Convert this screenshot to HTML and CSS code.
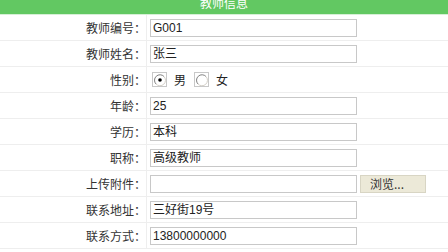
FILE: index.html
```html
<!DOCTYPE html>
<html lang="zh-CN">
<head>
    <meta charset="UTF-8">
    <title>教师信息</title>
    <link rel="stylesheet" href="styles.css">
</head>
<body>
    <div class="panel">
        <div class="panel-title">教师信息</div>
        <div class="form">
            <div class="row">
                <div class="label">教师编号：</div>
                <div class="field"><span class="text-box">G001</span></div>
            </div>
            <div class="row">
                <div class="label">教师姓名：</div>
                <div class="field"><span class="text-box">张三</span></div>
            </div>
            <div class="row">
                <div class="label">性别：</div>
                <div class="field">
                    <span class="radio-box">
                        <svg width="12" height="12" viewBox="0 0 12 12">
                            <path d="M10 2.5 A5 5 0 0 0 2 10" fill="none" stroke="#808080" stroke-width="1"/>
                            <path d="M2 10 A5 5 0 0 0 10 2.5" fill="none" stroke="#d4d0c8" stroke-width="1"/>
                            <circle cx="6" cy="6" r="4" fill="#fff"/>
                            <circle cx="6" cy="6" r="1.8" fill="#000"/>
                        </svg>
                    </span>
                    <span class="radio-text">男</span>
                    <span class="radio-box">
                        <svg width="12" height="12" viewBox="0 0 12 12">
                            <path d="M10 2.5 A5 5 0 0 0 2 10" fill="none" stroke="#808080" stroke-width="1"/>
                            <path d="M2 10 A5 5 0 0 0 10 2.5" fill="none" stroke="#d4d0c8" stroke-width="1"/>
                            <circle cx="6" cy="6" r="4" fill="#fff"/>
                        </svg>
                    </span>
                    <span class="radio-text">女</span>
                </div>
            </div>
            <div class="row">
                <div class="label">年龄：</div>
                <div class="field"><span class="text-box">25</span></div>
            </div>
            <div class="row">
                <div class="label">学历：</div>
                <div class="field"><span class="text-box">本科</span></div>
            </div>
            <div class="row">
                <div class="label">职称：</div>
                <div class="field"><span class="text-box">高级教师</span></div>
            </div>
            <div class="row">
                <div class="label">上传附件：</div>
                <div class="field">
                    <span class="text-box"></span>
                    <span class="browse-btn">浏览...</span>
                </div>
            </div>
            <div class="row">
                <div class="label">联系地址：</div>
                <div class="field"><span class="text-box">三好街19号</span></div>
            </div>
            <div class="row">
                <div class="label">联系方式：</div>
                <div class="field"><span class="text-box">13800000000</span></div>
            </div>
        </div>
    </div>
</body>
</html>
```

FILE: styles.css
```css
* {
    margin: 0;
    padding: 0;
    box-sizing: border-box;
}

body {
    background: #fff;
    color: #333;
    font-family: "Liberation Sans", "Noto Sans CJK SC", sans-serif;
    font-size: 12px;
    overflow: hidden;
}

.panel {
    width: 448px;
}

.panel-title {
    height: 15px;
    line-height: 6px;
    background: #62c862;
    border-bottom: 1px solid #d6f0d6;
    color: #fff;
    text-align: center;
    font-family: "Noto Sans CJK SC", sans-serif;
    font-size: 12px;
    overflow: hidden;
}

.row {
    display: grid;
    grid-template-columns: 147px 1fr;
    height: 26px;
    border-bottom: 1px solid #eeeeee;
}

.label {
    border-right: 1px solid #eeeeee;
    text-align: right;
    padding-right: 0;
    line-height: 25px;
    font-family: "Noto Sans CJK SC", sans-serif;
    color: #333;
    letter-spacing: 0;
}

.field {
    display: flex;
    align-items: center;
    padding-left: 3px;
}

.text-box {
    display: block;
    width: 207px;
    height: 18px;
    border: 1px solid #c8c8c8;
    background: #fff;
    line-height: 16px;
    padding-left: 2px;
    color: #222;
    white-space: nowrap;
    overflow: hidden;
}

.radio-box {
    display: flex;
    align-items: center;
    justify-content: center;
    width: 15px;
    height: 15px;
    border: 1px solid #c8c8c8;
    background: #fff;
    margin-left: 2px;
}

.radio-text {
    font-family: "Noto Sans CJK SC", sans-serif;
    margin: 0 6px 0 7px;
    color: #222;
}

.browse-btn {
    display: block;
    height: 18px;
    width: 66px;
    margin-left: 3px;
    background: #ece9d8;
    border: 1px solid #d8d5c4;
    color: #333;
    line-height: 16px;
    padding-left: 9px;
    font-family: "Noto Sans CJK SC", sans-serif;
}
```
